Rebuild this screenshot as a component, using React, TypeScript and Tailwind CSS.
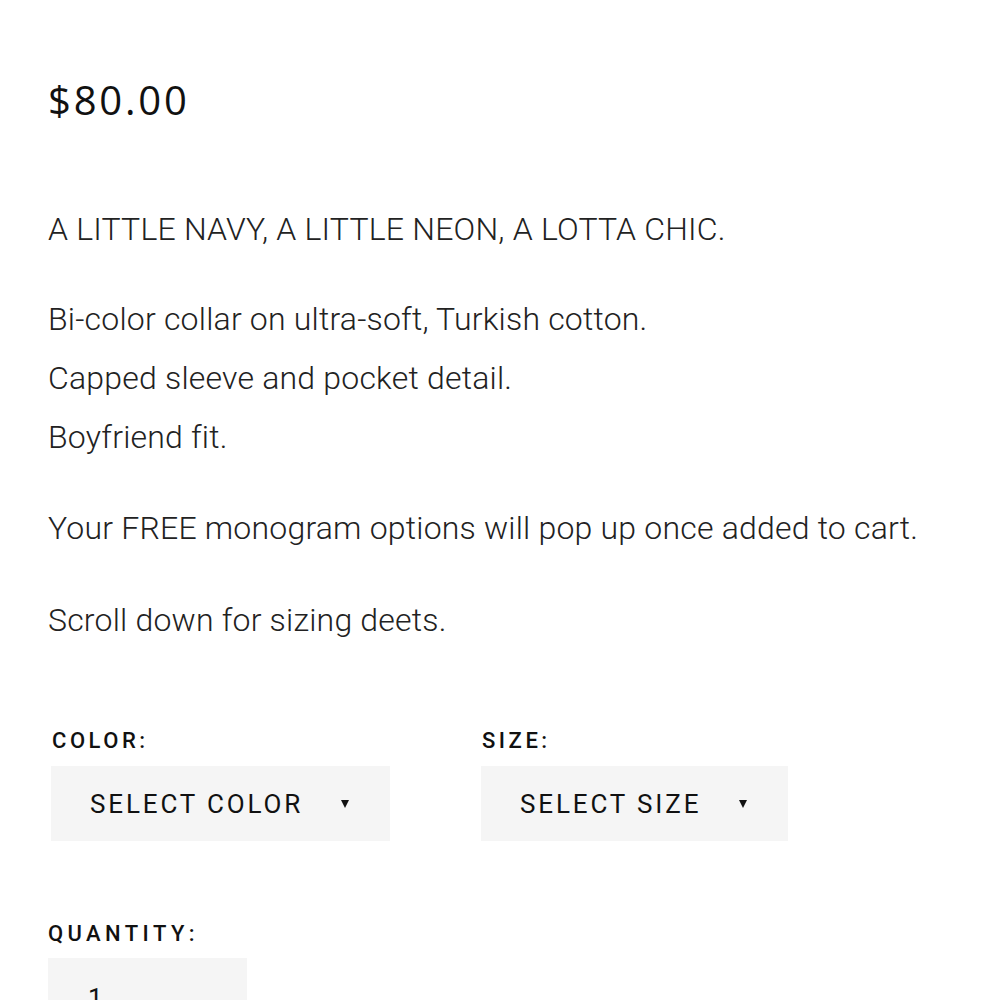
import type { FC } from "react";

const BODY_FONT = "font-['Roboto',_'Liberation_Sans',_sans-serif]";

type SelectBoxProps = {
  label: string;
  placeholder: string;
};

/** ラベル付きの疑似セレクトボックス */
const SelectBox: FC<SelectBoxProps> = ({ label, placeholder }) => {
  return (
    <div className="flex flex-col">
      <p className="pl-[1px] text-[22px] leading-[26px] font-medium tracking-[0.16em] text-[#111]">{label}</p>
      <div className="mt-[12px] flex h-[75px] items-center self-start bg-[#f5f5f5] pr-[41px] pl-[39px]">
        <span className="text-[26px] leading-none tracking-[0.11em] text-[#111]">{placeholder}</span>
        <span className="ml-[38px] h-0 w-0 border-x-[4px] border-t-[8px] border-x-transparent border-t-[#111]" />
      </div>
    </div>
  );
};

const App: FC = () => {
  return (
    <div className={`min-h-[1000px] overflow-hidden bg-white pl-[48px] ${BODY_FONT}`}>
      <p className="pt-[74px] font-['Open_Sans',_sans-serif] text-[40px] leading-[52px] tracking-[0.07em] text-[#111]">
        $80.00
      </p>
      <div className="mt-[74px] text-[32px] leading-[59px] font-light tracking-[0.2px] text-[#222]">
        <p>A LITTLE NAVY, A LITTLE NEON, A LOTTA CHIC.</p>
        <p className="mt-[31px]">
          Bi-color collar on ultra-soft, Turkish cotton.
          <br />
          Capped sleeve and pocket detail.
          <br />
          Boyfriend fit.
        </p>
        <p className="mt-[32px]">Your FREE monogram options will pop up once added to cart.</p>
        <p className="mt-[33px]">Scroll down for sizing deets.</p>
      </div>
      <div className="mt-[78px] flex pl-[3px]">
        <div className="w-[430px]">
          <SelectBox label="COLOR:" placeholder="SELECT COLOR" />
        </div>
        <SelectBox label="SIZE:" placeholder="SELECT SIZE" />
      </div>
      <div className="mt-[80px]">
        <p className="text-[22px] leading-[26px] font-medium tracking-[0.2em] text-[#111]">QUANTITY:</p>
        <div className="mt-[11px] h-[75px] w-[199px] bg-[#f5f5f5] pt-[27px] pl-[40px] text-[26px] leading-none text-[#111]">
          1
        </div>
      </div>
    </div>
  );
};

export default App;
